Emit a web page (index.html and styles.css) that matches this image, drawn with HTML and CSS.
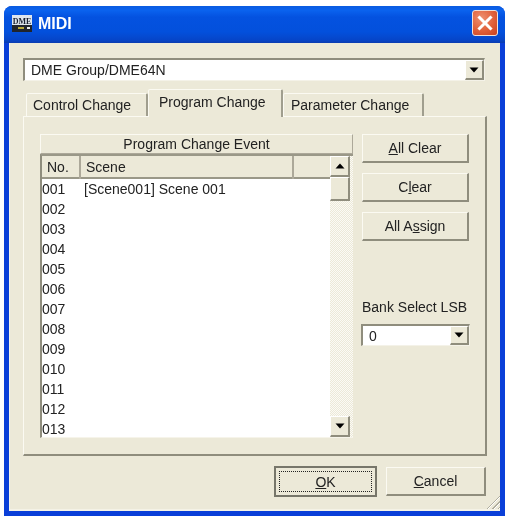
FILE: index.html
```html
<!DOCTYPE html>
<html lang="en">
<head>
<meta charset="utf-8">
<title>MIDI</title>
<link rel="stylesheet" href="styles.css">
</head>
<body>
<div class="window">
  <header class="titlebar">
    <svg class="app-icon" width="20" height="17" viewBox="0 0 20 17"><rect width="20" height="10" fill="#dfe6ee"/><rect y="10" width="20" height="7" fill="#20242c"/><text x="10" y="8.5" text-anchor="middle" class="icon-text">DME</text><rect x="6" y="12" width="6" height="2" fill="#b8a838"/><rect x="15" y="12" width="3" height="2" fill="#e8e8e8"/></svg>
    <span class="title">MIDI</span>
    <button class="close" aria-label="Close"><svg width="16" height="16" viewBox="0 0 16 16"><path d="M2.5 2.5 13.5 13.5M13.5 2.5 2.5 13.5" stroke="#fff" stroke-width="3" stroke-linecap="square"/></svg></button>
  </header>
  <main class="client">
    <div class="combo combo-wide">
      <span class="combo-value">DME Group/DME64N</span>
      <span class="arrow-btn"><svg width="10" height="6" viewBox="0 0 10 6"><path d="M0.5 0.5H9.5L5 5.5Z" fill="#000"/></svg></span>
    </div>
    <nav class="tabs">
      <span class="tab tab-first">Control Change</span>
      <span class="tab tab-active">Program Change</span>
      <span class="tab tab-last">Parameter Change</span>
    </nav>
    <section class="panel">
      <div class="left-col">
        <div class="caption">Program Change Event</div>
        <div class="list">
          <div class="list-main">
            <div class="list-head">
              <span class="hcell hcell-no">No.</span>
              <span class="hcell hcell-scene">Scene</span>
              <span class="hcell hcell-rest"></span>
            </div>
            <div class="rows">
              <div class="row"><span class="no">001</span><span>[Scene001] Scene 001</span></div>
              <div class="row"><span class="no">002</span></div>
              <div class="row"><span class="no">003</span></div>
              <div class="row"><span class="no">004</span></div>
              <div class="row"><span class="no">005</span></div>
              <div class="row"><span class="no">006</span></div>
              <div class="row"><span class="no">007</span></div>
              <div class="row"><span class="no">008</span></div>
              <div class="row"><span class="no">009</span></div>
              <div class="row"><span class="no">010</span></div>
              <div class="row"><span class="no">011</span></div>
              <div class="row"><span class="no">012</span></div>
              <div class="row"><span class="no">013</span></div>
            </div>
          </div>
          <div class="scrollbar">
            <span class="sb-btn"><svg width="10" height="6" viewBox="0 0 10 6"><path d="M0.5 5.5H9.5L5 0.5Z" fill="#000"/></svg></span>
            <span class="sb-thumb"></span>
            <span class="sb-track"></span>
            <span class="sb-btn"><svg width="10" height="6" viewBox="0 0 10 6"><path d="M0.5 0.5H9.5L5 5.5Z" fill="#000"/></svg></span>
          </div>
        </div>
      </div>
      <div class="right-col">
        <button class="btn side-btn"><u>A</u>ll Clear</button>
        <button class="btn side-btn">C<u>l</u>ear</button>
        <button class="btn side-btn">All A<u>s</u>sign</button>
        <label class="bank-label">Bank Select LSB</label>
        <div class="combo combo-small">
          <span class="combo-value">0</span>
          <span class="arrow-btn"><svg width="10" height="6" viewBox="0 0 10 6"><path d="M0.5 0.5H9.5L5 5.5Z" fill="#000"/></svg></span>
        </div>
      </div>
    </section>
    <footer class="actions">
      <button class="btn ok"><span class="focus"><u>O</u>K</span></button>
      <button class="btn cancel"><u>C</u>ancel</button>
    </footer>
    <span class="grip"></span>
  </main>
</div>
</body>
</html>
```
FILE: styles.css
```css
* { box-sizing: border-box; }
html, body { margin: 0; padding: 0; background: #fff; }
body {
  width: 509px;
  height: 517px;
  padding: 6px 4px 1px;
  font-family: "Liberation Sans", Arial, sans-serif;
  font-size: 14px;
  color: #222;
  overflow: hidden;
}
.window {
  height: 510px;
  display: flex;
  flex-direction: column;
  border-radius: 8px 8px 0 0;
  background: #0a3fd8;
  filter: blur(0.5px);
}
.titlebar {
  flex: 0 0 37px;
  display: flex;
  align-items: center;
  padding: 0 7px 0 8px;
  border-radius: 8px 8px 0 0;
  background: linear-gradient(#0a5be0 0, #0a62ee 12%, #0452e0 30%, #0350dc 70%, #0645c8 92%, #0a3cb0 100%);
}
.app-icon { margin: -3px 6px 0 0; }
.icon-text { font: bold 8px "Liberation Serif", serif; fill: #1a2030; }
.title {
  flex: 1;
  font-size: 16px;
  font-weight: bold;
  color: #fff;
  margin-top: -2px;
}
.close {
  width: 26px;
  height: 26px;
  margin: -3px 0 0;
  padding: 0;
  display: flex;
  align-items: center;
  justify-content: center;
  border: 1px solid #f0e0d8;
  border-radius: 3px;
  background: radial-gradient(circle at 35% 30%, #ee9070, #e0603a 55%, #c84020);
}
.client {
  flex: 1;
  position: relative;
  margin: 0 5px 5px;
  padding: 15px 14px 0;
  background: #ece9d8;
  box-shadow: inset 1px 0 0 #f6f4ea, inset 0 -2px 0 #f4f2e6;
  display: flex;
  flex-direction: column;
}
.combo {
  display: flex;
  align-items: center;
  background: #fff;
  border-style: solid;
  border-width: 2px 1px 1px 2px;
  border-color: #8f8d7d #f4f2e8 #f4f2e8 #8f8d7d;
}
.combo-wide { width: 462px; height: 23px; }
.combo-small { width: 109px; height: 22px; }
.combo-value { flex: 1; padding-left: 6px; }
.arrow-btn {
  width: 19px;
  align-self: stretch;
  display: flex;
  align-items: center;
  justify-content: center;
  background: #ece9d8;
  border-style: solid;
  border-width: 1px 2px 2px 1px;
  border-color: #fff #8f8d7d #8f8d7d #fff;
}
.tabs {
  display: flex;
  align-items: flex-end;
  height: 35px;
  padding-left: 3px;
  position: relative;
  z-index: 1;
}
.tab {
  height: 23px;
  display: flex;
  align-items: center;
  background: #ece9d8;
  border-style: solid;
  border-width: 1px 2px 0 1px;
  border-color: #fbfaf2 #a09e8e transparent #fbfaf2;
  border-radius: 2px 2px 0 0;
  padding-bottom: 1px;
}
.tab-first { width: 122px; padding-left: 6px; }
.tab-active {
  width: 135px;
  height: 28px;
  margin-bottom: -1px;
  padding-left: 10px;
  padding-bottom: 4px;
}
.tab-last { width: 141px; padding-left: 7px; }
.panel {
  width: 464px;
  height: 340px;
  display: flex;
  padding: 17px 17px 0 16px;
  border-style: solid;
  border-width: 1px 2px 2px 1px;
  border-color: #fbfaf2 #8f8d7d #8f8d7d #fbfaf2;
}
.left-col { flex: 0 0 313px; }
.caption {
  height: 20px;
  text-align: center;
  line-height: 18px;
  border: 1px solid;
  border-color: #fbfaf2 #aca899 #aca899 #fbfaf2;
}
.list {
  height: 284px;
  display: flex;
  background: #fff;
  border-style: solid;
  border-width: 2px 0 1px 2px;
  border-color: #9a9888 transparent #f6f4ea #8f8d7d;
}
.list-main { flex: 1; min-width: 0; }
.list-head { height: 23px; display: flex; background: #ece9d8; box-shadow: inset 0 -2px 0 #9a9888; }
.hcell {
  display: flex;
  align-items: center;
  padding: 0 0 2px 5px;
  height: 23px;
  border-right: 2px solid #aca899;
}
.hcell-no { width: 39px; }
.hcell-scene { width: 213px; }
.hcell-rest { flex: 1; border-right: 0; }
.row { height: 20px; display: flex; align-items: center; padding-bottom: 1px; }
.no { width: 42px; }
.scrollbar {
  flex: 0 0 23px;
  display: flex;
  flex-direction: column;
  background-color: #fbfaf5;
  background-image: repeating-conic-gradient(#ece9d8 0 25%, #fbfaf5 0 50%);
  background-size: 2px 2px;
}
.sb-btn, .sb-thumb {
  width: 20px;
  display: flex;
  align-items: center;
  justify-content: center;
  background: #ece9d8;
  border-style: solid;
  border-width: 1px 2px 2px 1px;
  border-color: #fff #8f8d7d #8f8d7d #fff;
}
.sb-btn { height: 21px; }
.sb-thumb { height: 24px; }
.sb-track { flex: 1; }
.right-col {
  flex: 1;
  min-width: 0;
  display: flex;
  flex-direction: column;
  align-items: flex-start;
  padding-left: 9px;
}
.btn {
  font: inherit;
  color: inherit;
  padding: 0;
  background: #ece9d8;
  border-style: solid;
  border-width: 1px 2px 2px 1px;
  border-color: #fbfaf2 #8f8d7d #8f8d7d #fbfaf2;
}
.side-btn { width: 107px; height: 29px; margin-bottom: 10px; flex: none; }
.bank-label { margin-top: 46px; margin-left: 0; height: 20px; line-height: 20px; white-space: nowrap; }
.combo-small { margin-top: 7px; margin-left: -1px; flex: none; }
.actions {
  display: flex;
  align-items: center;
  justify-content: flex-end;
  gap: 9px;
  padding: 10px 0 0;
  width: 463px;
}
.ok {
  width: 103px;
  height: 31px;
  border: 2px solid #77766a;
  padding: 3px;
}
.focus {
  display: flex;
  align-items: center;
  justify-content: center;
  height: 100%;
  border: 1px dotted #222;
}
.cancel { width: 100px; height: 29px; }
.grip {
  position: absolute;
  right: 0;
  bottom: 2px;
  width: 14px;
  height: 14px;
  background: repeating-linear-gradient(135deg, transparent 0 2px, #b0ae9e 2px 3px, #fff 3px 4px);
  clip-path: polygon(100% 0, 100% 100%, 0 100%);
}
```
